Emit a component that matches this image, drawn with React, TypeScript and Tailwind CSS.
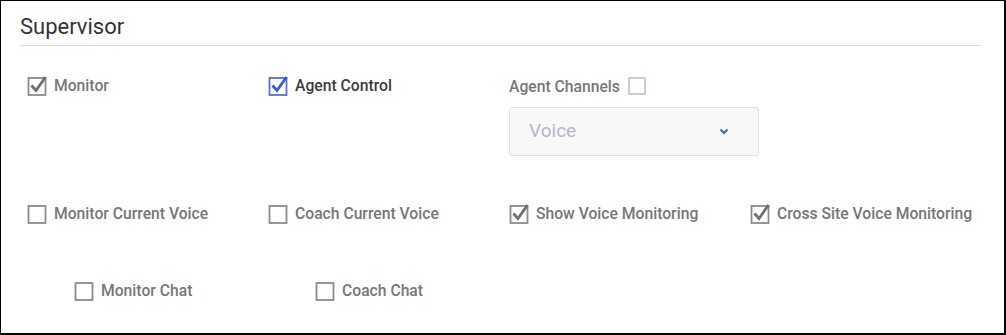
type CheckProps = {
  label: string;
  checked?: boolean;
  active?: boolean;
};

function CheckIcon({ checked, active }: { checked?: boolean; active?: boolean }) {
  const box = active ? "#5b6fd8" : "#8c8c8c";
  const tick = active ? "#2f5fe0" : "#6f6f6f";
  return (
    <svg width="21" height="21" viewBox="0 0 21 21" className="shrink-0">
      <rect x="1.5" y="3" width="17" height="17" fill="none" stroke={box} strokeWidth="1.8" />
      {checked && (
        <path d="M4.5 10.5 L9 15.5 L18.5 2" fill="none" stroke={tick} strokeWidth="2.8" strokeLinejoin="miter" />
      )}
    </svg>
  );
}

function Check({ label, checked, active }: CheckProps) {
  return (
    <label className="flex items-center gap-[6px]">
      <CheckIcon checked={checked} active={active} />
      <span className={`text-[15.7px] font-medium ${active ? "text-[#3c3c3c]" : "text-[#777777]"}`}>{label}</span>
    </label>
  );
}

export default function App() {
  return (
    <div className="h-[335px] w-[1006px] border-t border-l border-r-2 border-b-2 border-black bg-white font-['Roboto',sans-serif]">
      <div className="px-[19px] pt-[11px]">
        <h2 className="mr-[4px] border-b border-[#dcdcdc] pb-[3px] text-[22px] leading-[30px] text-[#333333]">Supervisor</h2>
      </div>

      <div className="grid grid-cols-[241px_241px_241px_241px] pl-[26px] pt-[27px]">
        <div className="pt-[1px]">
          <Check label="Monitor" checked />
        </div>
        <div className="pt-[1px]">
          <Check label="Agent Control" checked active />
        </div>
        <div>
          <div className="flex items-center gap-[8px] pt-[2px]">
            <span className="text-[15.7px] font-medium text-[#777777]">Agent Channels</span>
            <span className="mt-[-1px] h-[18px] w-[18px] border-2 border-[#c9cfdb]" />
          </div>
          <div className="mt-[8px] flex h-[49px] w-[250px] items-center justify-between rounded-[3px] border border-[#e2e2e2] bg-[#f8f8f8] pl-[19px] pr-[29px]">
            <span className="text-[19px] text-[#aeb8cc]">Voice</span>
            <svg width="10" height="7" viewBox="0 0 10 7">
              <path d="M1.5 1.5 L5 5 L8.5 1.5" fill="none" stroke="#3f63d8" strokeWidth="2" />
            </svg>
          </div>
        </div>
        <div />
      </div>

      <div className="grid grid-cols-[241px_241px_241px_241px] pl-[26px] pt-[46px]">
        <Check label="Monitor Current Voice" />
        <Check label="Coach Current Voice" />
        <Check label="Show Voice Monitoring" checked />
        <Check label="Cross Site Voice Monitoring" checked />
      </div>

      <div className="grid grid-cols-[241px_241px] pl-[73px] pt-[54px]">
        <Check label="Monitor Chat" />
        <Check label="Coach Chat" />
      </div>
    </div>
  );
}
